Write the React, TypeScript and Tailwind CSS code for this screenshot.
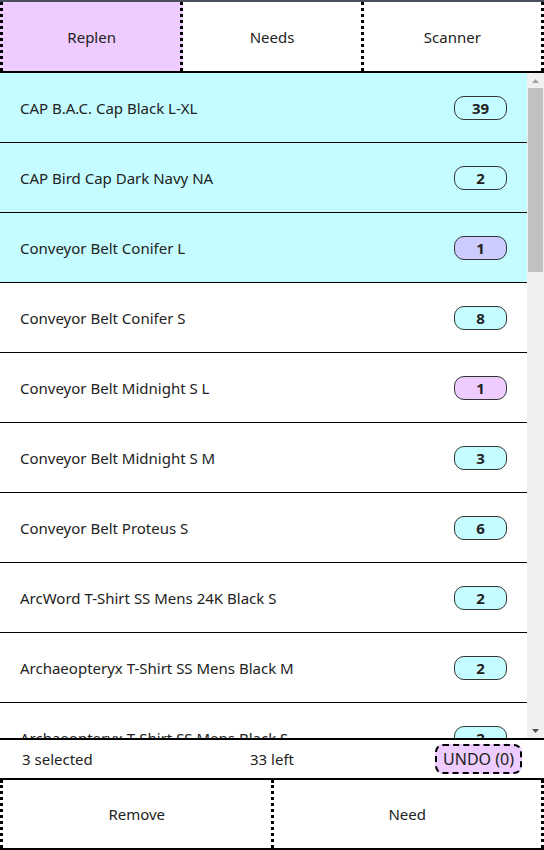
import React from "react";

type Item = {
  name: string;
  qty: number;
  selected?: boolean;
  badge: "cyan" | "violet" | "pink";
};

const items: Item[] = [
  { name: "CAP B.A.C. Cap Black L-XL", qty: 39, selected: true, badge: "cyan" },
  { name: "CAP Bird Cap Dark Navy NA", qty: 2, selected: true, badge: "cyan" },
  { name: "Conveyor Belt Conifer L", qty: 1, selected: true, badge: "violet" },
  { name: "Conveyor Belt Conifer S", qty: 8, badge: "cyan" },
  { name: "Conveyor Belt Midnight S L", qty: 1, badge: "pink" },
  { name: "Conveyor Belt Midnight S M", qty: 3, badge: "cyan" },
  { name: "Conveyor Belt Proteus S", qty: 6, badge: "cyan" },
  { name: "ArcWord T-Shirt SS Mens 24K Black S", qty: 2, badge: "cyan" },
  { name: "Archaeopteryx T-Shirt SS Mens Black M", qty: 2, badge: "cyan" },
  { name: "Archaeopteryx T-Shirt SS Mens Black S", qty: 2, badge: "cyan" },
];

const badgeBg = {
  cyan: "bg-[#c4fcff]",
  violet: "bg-[#ccccff]",
  pink: "bg-[#eeccff]",
};

export default function App() {
  return (
    <div className="w-[544px] h-[850px] flex flex-col bg-white text-[#222] font-['Noto_Sans',sans-serif] text-[15px] overflow-hidden">
      {/* top strip */}
      <div className="h-[2px] bg-[#4a4f5c] shrink-0" />

      {/* tabs */}
      <div className="flex h-[71px] shrink-0 border-b-2 border-black">
        <button className="flex-1 flex items-center justify-center pt-[2px] bg-[#eeccff] border-l-[3px] border-r-[3px] border-dotted border-black">
          Replen
        </button>
        <button className="flex-1 flex items-center justify-center pt-[2px] bg-white">
          Needs
        </button>
        <button className="flex-1 flex items-center justify-center pt-[2px] bg-white border-l-[3px] border-r-[3px] border-dotted border-black">
          Scanner
        </button>
      </div>

      {/* list + scrollbar */}
      <div className="flex flex-1 min-h-0">
        <div className="flex-1 overflow-hidden">
          {items.map((it) => (
            <div
              key={it.name}
              className={`h-[70px] flex items-center justify-between pl-5 pr-5 pt-[1px] border-b border-black shrink-0 ${
                it.selected ? "bg-[#c4fcff]" : "bg-white"
              }`}
            >
              <span>{it.name}</span>
              <span
                className={`w-[53px] h-[24px] flex items-center justify-center rounded-[10px] border border-[#333] text-[15px] font-bold ${badgeBg[it.badge]}`}
              >
                {it.qty}
              </span>
            </div>
          ))}
        </div>
        <div className="w-[17px] bg-[#f0f0f0] flex flex-col items-center shrink-0">
          <div className="h-[15px] flex items-center justify-center">
            <svg width="7" height="4" viewBox="0 0 7 4">
              <path d="M0 4 L3.5 0 L7 4 Z" fill="#a3a3a3" />
            </svg>
          </div>
          <div className="w-[15px] h-[184px] bg-[#c1c1c1]" />
          <div className="flex-1" />
          <div className="h-[15px] flex items-center justify-center">
            <svg width="7" height="4" viewBox="0 0 7 4">
              <path d="M0 0 L7 0 L3.5 4 Z" fill="#505050" />
            </svg>
          </div>
        </div>
      </div>

      {/* status bar */}
      <div className="grid grid-cols-3 items-center h-[40px] shrink-0 border-t-2 border-black px-[22px]">
        <span>3 selected</span>
        <span className="text-center">33 left</span>
        <div className="flex justify-end">
          <button className="h-[30px] px-[6px] rounded-[8px] border-2 border-dashed border-black bg-[#eeccff] text-[16px]">
            UNDO (0)
          </button>
        </div>
      </div>

      {/* action buttons */}
      <div className="flex h-[72px] shrink-0 border-y-2 border-black">
        <button className="flex-1 flex items-center justify-center pt-[1px] border-l-[3px] border-dotted border-black">
          Remove
        </button>
        <button className="flex-1 flex items-center justify-center pt-[1px] border-l-[3px] border-r-[3px] border-dotted border-black">
          Need
        </button>
      </div>
    </div>
  );
}
